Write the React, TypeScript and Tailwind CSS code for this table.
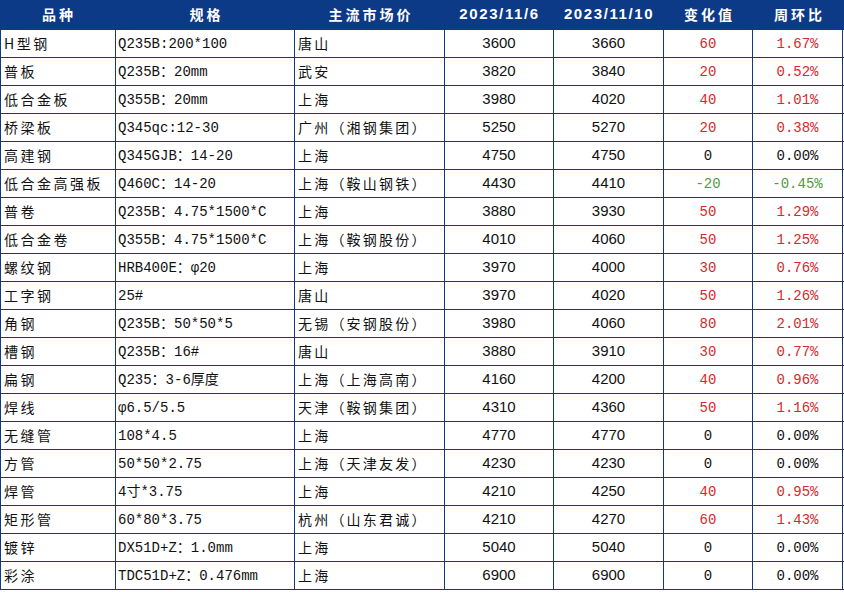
import React from "react";

type Row = [string, string, string, string, string, string, string];

const rows: Row[] = [
  ["H型钢", "Q235B:200*100", "唐山", "3600", "3660", "60", "1.67%"],
  ["普板", "Q235B：20mm", "武安", "3820", "3840", "20", "0.52%"],
  ["低合金板", "Q355B：20mm", "上海", "3980", "4020", "40", "1.01%"],
  ["桥梁板", "Q345qc:12-30", "广州（湘钢集团）", "5250", "5270", "20", "0.38%"],
  ["高建钢", "Q345GJB：14-20", "上海", "4750", "4750", "0", "0.00%"],
  ["低合金高强板", "Q460C：14-20", "上海（鞍山钢铁）", "4430", "4410", "-20", "-0.45%"],
  ["普卷", "Q235B：4.75*1500*C", "上海", "3880", "3930", "50", "1.29%"],
  ["低合金卷", "Q355B：4.75*1500*C", "上海（鞍钢股份）", "4010", "4060", "50", "1.25%"],
  ["螺纹钢", "HRB400E：φ20", "上海", "3970", "4000", "30", "0.76%"],
  ["工字钢", "25#", "唐山", "3970", "4020", "50", "1.26%"],
  ["角钢", "Q235B：50*50*5", "无锡（安钢股份）", "3980", "4060", "80", "2.01%"],
  ["槽钢", "Q235B：16#", "唐山", "3880", "3910", "30", "0.77%"],
  ["扁钢", "Q235：3-6厚度", "上海（上海高南）", "4160", "4200", "40", "0.96%"],
  ["焊线", "φ6.5/5.5", "天津（鞍钢集团）", "4310", "4360", "50", "1.16%"],
  ["无缝管", "108*4.5", "上海", "4770", "4770", "0", "0.00%"],
  ["方管", "50*50*2.75", "上海（天津友发）", "4230", "4230", "0", "0.00%"],
  ["焊管", "4寸*3.75", "上海", "4210", "4250", "40", "0.95%"],
  ["矩形管", "60*80*3.75", "杭州（山东君诚）", "4210", "4270", "60", "1.43%"],
  ["镀锌", "DX51D+Z：1.0mm", "上海", "5040", "5040", "0", "0.00%"],
  ["彩涂", "TDC51D+Z：0.476mm", "上海", "6900", "6900", "0", "0.00%"],
];

function colorFor(v: string) {
  if (v.startsWith("-")) return "text-[#4f9a3c]";
  if (v === "0" || v === "0.00%") return "text-[#111111]";
  return "text-[#d42a2a]";
}

const hCjk =
  "text-center text-[14px] font-bold tracking-[3px] pl-[2px] font-['Noto_Sans_CJK_SC',sans-serif]";
const hNum =
  "text-center text-[15px] font-bold tracking-[1.6px] font-['Liberation_Sans',Arial,sans-serif]";

export default function App() {
  return (
    <div className="w-[844px] h-[592px] bg-white overflow-hidden">
      <div className="flex h-[29px] bg-[#0d3a87] text-white items-center">
        <div className={`w-[116px] ${hCjk}`}>品种</div>
        <div className={`w-[179px] ${hCjk}`}>规格</div>
        <div className={`w-[150px] ${hCjk}`}>主流市场价</div>
        <div className={`w-[109px] ${hNum}`}>2023/11/6</div>
        <div className={`w-[110px] ${hNum}`}>2023/11/10</div>
        <div className={`w-[89px] ${hCjk}`}>变化值</div>
        <div className={`w-[91px] ${hCjk}`}>周环比</div>
      </div>
      <div className="border-l border-b border-[#0d3a87] w-[844px]">
        {rows.map((r, i) => (
          <div
            key={i}
            className="flex h-[28px] border-t border-[#0d3a87] text-[#111111]"
          >
            <div className="w-[115px] border-r border-[#0d3a87] flex items-center pl-[3px] text-[14px] tracking-[2.5px] whitespace-nowrap overflow-hidden font-['Noto_Sans_CJK_SC',sans-serif]">
              {r[0]}
            </div>
            <div className="w-[179px] border-r border-[#0d3a87] flex items-center pl-[2px] pt-[2px] text-[14px] whitespace-nowrap overflow-hidden font-['Liberation_Mono','Noto_Sans_CJK_SC',monospace]">
              {r[1]}
            </div>
            <div className="w-[150px] border-r border-[#0d3a87] flex items-center pl-[3px] text-[14px] tracking-[2.2px] whitespace-nowrap overflow-hidden font-['Noto_Sans_CJK_SC',sans-serif]">
              {r[2]}
            </div>
            <div className="w-[109px] border-r border-[#0d3a87] flex items-center justify-center text-[15px] font-['Liberation_Sans',Arial,sans-serif]">
              {r[3]}
            </div>
            <div className="w-[110px] border-r border-[#0d3a87] flex items-center justify-center text-[15px] font-['Liberation_Sans',Arial,sans-serif]">
              {r[4]}
            </div>
            <div
              className={`w-[89px] border-r border-[#0d3a87] flex items-center justify-center pt-[2px] text-[14px] font-['Liberation_Mono',monospace] ${colorFor(r[5])}`}
            >
              {r[5]}
            </div>
            <div
              className={`w-[90px] border-r border-[#0d3a87] flex items-center justify-center pt-[2px] text-[14px] font-['Liberation_Mono',monospace] ${colorFor(r[6])}`}
            >
              {r[6]}
            </div>
          </div>
        ))}
      </div>
    </div>
  );
}
